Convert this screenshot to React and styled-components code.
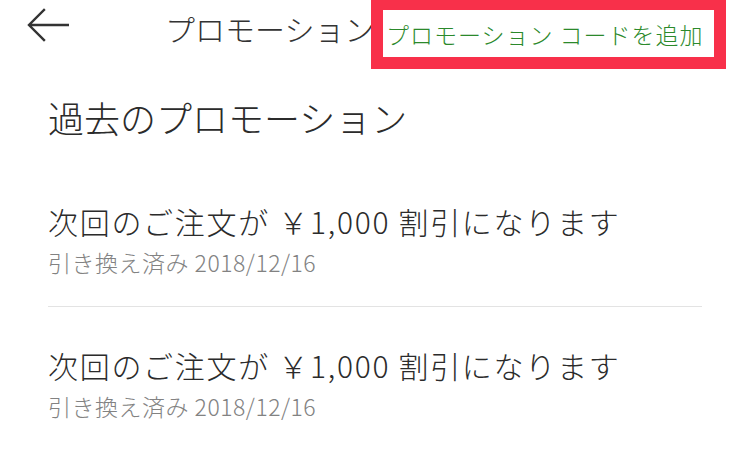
import React from "react";
import styled, { createGlobalStyle } from "styled-components";

const GlobalStyle = createGlobalStyle`
  html, body {
    margin: 0;
    padding: 0;
    background: #ffffff;
  }
  body {
    font-family: "Noto Sans CJK JP", "Noto Sans", sans-serif;
    font-weight: 300;
    color: #2b2b2b;
  }
`;

const Page = styled.div`
  width: 744px;
  height: 464px;
  overflow: hidden;
  background: #ffffff;
`;

const Header = styled.header`
  position: relative;
  display: flex;
  align-items: center;
  height: 56px;
  padding-left: 27px;
`;

const BackButton = styled.button`
  display: flex;
  align-items: center;
  justify-content: center;
  width: 42px;
  height: 36px;
  margin-top: -6px;
  padding: 0;
  border: 0;
  background: none;
  color: #333333;
  cursor: pointer;
`;

const Title = styled.h1`
  margin: 0 0 0 96px;
  font-size: 30px;
  font-weight: 300;
  line-height: 40px;
  color: #333333;
  white-space: nowrap;
`;

/* highlighted action, drawn over the end of the title */
const Highlight = styled.div`
  position: absolute;
  top: -2px;
  left: 371px;
  width: 331px;
  height: 47px;
  border: 12px solid #f8304a;
  background: #ffffff;
  display: flex;
  align-items: center;
`;

const AddCode = styled.button`
  padding: 0 0 0 3px;
  border: 0;
  background: none;
  font-family: inherit;
  font-size: 23px;
  font-weight: 300;
  line-height: 32px;
  letter-spacing: 1px;
  color: #2b892b;
  white-space: nowrap;
  cursor: pointer;
`;

const Content = styled.main`
  padding: 0 42px 0 48px;
`;

const SectionTitle = styled.h2`
  margin: 40px 0 25px;
  font-size: 36px;
  font-weight: 300;
  line-height: 42px;
  color: #2b2b2b;
`;

const Item = styled.div`
  padding: 38px 0 29px;
  border-bottom: ${(p) => (p.last ? "none" : "1px solid #e3e3e3")};
`;

const ItemTitle = styled.div`
  font-size: 30px;
  line-height: 40px;
  letter-spacing: 1.7px;
  color: #2b2b2b;
  white-space: nowrap;
`;

const ItemMeta = styled.div`
  margin-top: 6px;
  font-size: 23px;
  line-height: 30px;
  letter-spacing: 0.5px;
  color: #828282;
  white-space: nowrap;
`;

const promotions = [
  { title: "次回のご注文が ￥1,000 割引になります", redeemed: "2018/12/16" },
  { title: "次回のご注文が ￥1,000 割引になります", redeemed: "2018/12/16" },
];

function BackArrow() {
  return (
    <svg width="42" height="34" viewBox="0 0 42 34" fill="none">
      <path
        d="M41 17H3M17 2L2 17l15 15"
        stroke="currentColor"
        strokeWidth="2.4"
        strokeLinecap="square"
        strokeLinejoin="miter"
      />
    </svg>
  );
}

export default function App() {
  return (
    <Page>
      <GlobalStyle />
      <Header>
        <BackButton aria-label="戻る">
          <BackArrow />
        </BackButton>
        <Title>プロモーション</Title>
        <Highlight>
          <AddCode>プロモーション コードを追加</AddCode>
        </Highlight>
      </Header>
      <Content>
        <SectionTitle>過去のプロモーション</SectionTitle>
        {promotions.map((promo, i) => (
          <Item key={i} last={i === promotions.length - 1}>
            <ItemTitle>{promo.title}</ItemTitle>
            <ItemMeta>引き換え済み {promo.redeemed}</ItemMeta>
          </Item>
        ))}
      </Content>
    </Page>
  );
}
